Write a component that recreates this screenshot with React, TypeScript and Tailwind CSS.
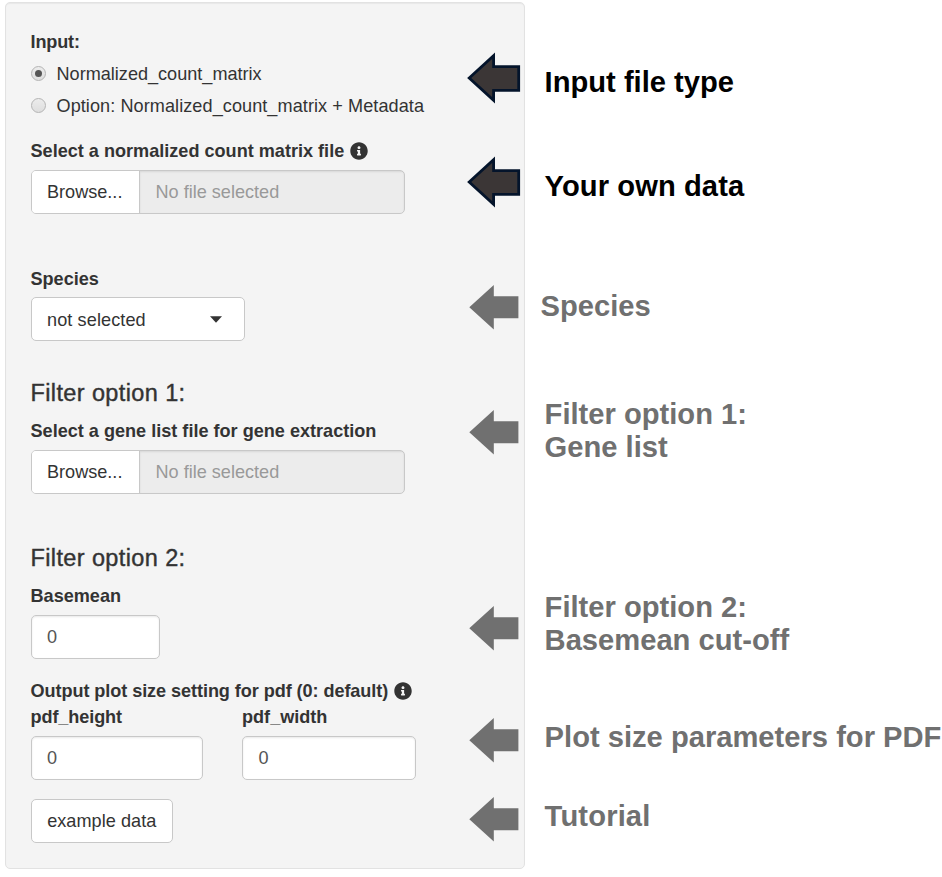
import React from "react";
import { FaInfoCircle } from "react-icons/fa";

function Label({ children, className = "" }: { children: React.ReactNode; className?: string }) {
  return (
    <div className={`flex h-5 items-center whitespace-nowrap text-[18.1px] font-bold leading-5 ${className}`}>
      {children}
    </div>
  );
}

function Info() {
  return <FaInfoCircle className="ml-[6px] size-[18px] shrink-0" />;
}

function Heading({ children, className = "" }: { children: React.ReactNode; className?: string }) {
  return (
    <h4
      className={`h-7 whitespace-nowrap text-[23.5px] leading-7 tracking-[0.38px] [-webkit-text-stroke:0.4px_#333] ${className}`}
    >
      {children}
    </h4>
  );
}

function Radio({ checked = false, children, className = "" }: { checked?: boolean; children: React.ReactNode; className?: string }) {
  return (
    <div className={`flex h-5 items-center whitespace-nowrap leading-5 ${className}`}>
      <span className="mb-[2px] mr-[11px] flex size-[15px] shrink-0 items-center justify-center rounded-full border border-[#b4b4b4] bg-linear-to-b from-[#ececec] to-[#dedede]">
        {checked && <span className="size-[7px] rounded-full bg-[#555]" />}
      </span>
      {children}
    </div>
  );
}

function FileInput({ className = "" }: { className?: string }) {
  return (
    <div
      className={`flex h-11 w-[374.5px] overflow-hidden rounded-[5px] border border-[#c8c8c8] bg-[#ececec] leading-[43px] ${className}`}
    >
      <div className="w-[108px] border-r border-[#c8c8c8] bg-white pl-[15.5px]">Browse...</div>
      <div className="grow pl-4 text-[#999] shadow-[inset_0_1px_2px_rgba(0,0,0,0.09)]">No file selected</div>
    </div>
  );
}

function NumberBox({ className = "" }: { className?: string }) {
  return (
    <div
      className={`h-11 rounded-[5px] border border-[#c8c8c8] bg-white pl-[15.5px] leading-[43px] text-[#555] shadow-[inset_0_1px_2px_rgba(0,0,0,0.09)] ${className}`}
    >
      0
    </div>
  );
}

function DarkArrow({ className = "" }: { className?: string }) {
  return (
    <svg viewBox="0 0 54 52" className={`block h-[52px] w-[54px] ${className}`}>
      <path d="M2.2 26 L26.6 3.7 V14.7 H51.7 V38.3 H26.6 V48.3 Z" fill="#3b3636" stroke="#04142b" strokeWidth="2.8" />
    </svg>
  );
}

function GrayArrow({ className = "" }: { className?: string }) {
  return (
    <svg viewBox="0 0 50 45" className={`ml-[2px] block h-[45px] w-[50px] ${className}`}>
      <path d="M0.3 22.2 L24.8 0 V11.2 H49.4 V33.3 H24.8 V44.5 Z" fill="#707070" />
    </svg>
  );
}

export default function App() {
  return (
    <div className="flex h-[877px] w-[942px] overflow-hidden bg-white pl-[5px] pt-[2px] font-['Liberation_Sans',Arial,sans-serif] text-[18.1px] text-[#333]">
      <div className="flex h-[867px] w-[520px] shrink-0 rounded-[5px] border border-[#e2e2e2] bg-[#f4f4f4] shadow-[inset_0_1px_1px_rgba(0,0,0,0.05)]">
        <div className="w-[461px] shrink-0 pl-[24.5px] pt-[29px]">
          <Label className="tracking-[-0.15px]">Input:</Label>
          <Radio checked className="mt-3">Normalized_count_matrix</Radio>
          <Radio className="mt-3 tracking-[0.07px]">Option: Normalized_count_matrix + Metadata</Radio>
          <Label className="mt-[25px]">
            Select a normalized count matrix file
            <Info />
          </Label>
          <FileInput className="mt-[9px]" />

          <Label className="mt-[55px]">Species</Label>
          <div className="mt-[8px] flex h-[44px] w-[214.5px] items-center justify-between rounded-[5px] border border-[#c8c8c8] bg-white pl-[15.5px] pr-[22px]">
            <span className="pt-[3px] tracking-[0.1px]">not selected</span>
            <svg viewBox="0 0 12 7" className="h-[7px] w-3">
              <path d="M0 0.3 H12 L6 6.8 Z" fill="#333" />
            </svg>
          </div>

          <Heading className="mt-[38px]">Filter option 1:</Heading>
          <Label className="mt-[14px]">Select a gene list file for gene extraction</Label>
          <FileInput className="mt-[9px]" />

          <Heading className="mt-[50px]">Filter option 2:</Heading>
          <Label className="mt-[14px]">Basemean</Label>
          <NumberBox className="mt-[9px] w-[129.5px]" />

          <Label className="mt-[22px] tracking-[-0.07px]">
            Output plot size setting for pdf (0: default)
            <Info />
          </Label>
          <div className="mt-[6px] flex gap-[39px]">
            <div className="w-[172.5px]">
              <Label className="tracking-[-0.1px]">pdf_height</Label>
              <NumberBox className="mt-[9px]" />
            </div>
            <div className="w-[173.5px]">
              <Label>pdf_width</Label>
              <NumberBox className="mt-[9px]" />
            </div>
          </div>
          <button className="mt-[19px] block h-11 w-[142.5px] whitespace-nowrap rounded-[5px] border border-[#c8c8c8] bg-white pt-[2px] tracking-[0.05px]">
            example data
          </button>
        </div>
        <div className="w-[54px] shrink-0 pt-[49px]">
          <DarkArrow />
          <DarkArrow className="mt-[52px]" />
          <GrayArrow className="mt-[77px]" />
          <GrayArrow className="mt-[80px]" />
          <GrayArrow className="mt-[151px]" />
          <GrayArrow className="mt-[66.5px]" />
          <GrayArrow className="mt-[34px]" />
        </div>
      </div>
      <div className="shrink-0 whitespace-nowrap pl-[19.6px] pt-[64px] text-[29.15px] font-bold leading-[33px] text-[#707070]">
        <div className="text-black">Input file type</div>
        <div className="mt-[71px] tracking-[0.08px] text-black">Your own data</div>
        <div className="-ml-1 mt-[87px]">Species</div>
        <div className="mt-[75px]">
          Filter option 1:
          <br />
          Gene list
        </div>
        <div className="mt-[127px]">
          Filter option 2:
          <br />
          Basemean cut-off
        </div>
        <div className="mt-[64px]">Plot size parameters for PDF</div>
        <div className="mt-[46px] tracking-[0.15px]">Tutorial</div>
      </div>
    </div>
  );
}
